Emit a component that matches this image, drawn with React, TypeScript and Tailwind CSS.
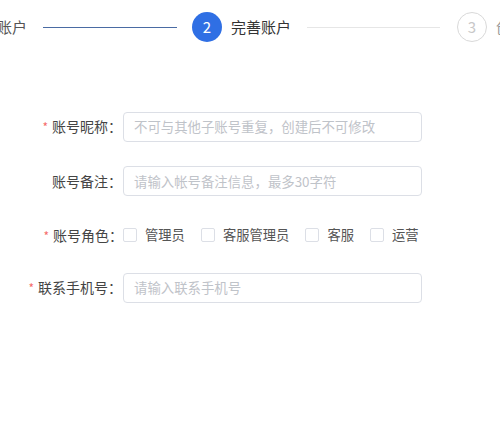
import React from "react";

const font = { fontFamily: '"Noto Sans CJK SC", "Noto Sans", sans-serif' };

function Field({
  label,
  required,
  placeholder,
  className,
}: {
  label: string;
  required?: boolean;
  placeholder: string;
  className?: string;
}) {
  return (
    <div className={"flex items-center " + (className ?? "")}>
      <div className="w-[122px] shrink-0 text-right text-[14px] leading-[30px] text-[#444]">
        {required && <span className="mr-[4px] text-[12px] text-[#f56c6c]">*</span>}
        {label}：
      </div>
      <div className="ml-[1px] flex h-[30px] w-[299px] items-center rounded-[4px] border border-[#dcdfe6] bg-white pl-[10px] text-[13.4px] text-[#bfc3c9]">
        {placeholder}
      </div>
    </div>
  );
}

function Check({ label, className }: { label: string; className?: string }) {
  return (
    <div className={"flex items-center " + (className ?? "")}>
      <span className="h-[14px] w-[14px] rounded-[2px] border border-[#dcdfe6] bg-white" />
      <span className="ml-[8px] text-[13.3px] text-[#555]">{label}</span>
    </div>
  );
}

export default function App() {
  return (
    <div className="h-[421px] w-[500px] overflow-hidden bg-white" style={font}>
      <div className="flex h-[54px] items-center whitespace-nowrap">
        <span className="ml-[-33px] shrink-0 text-[15px] text-[#555]">创建账户</span>
        <span className="ml-[16px] h-px w-[134px] shrink-0 bg-[#4a6ba3]" />
        <span className="ml-[15px] flex h-[30px] w-[30px] shrink-0 items-center justify-center rounded-full bg-[#2f6fe4] text-[15px] text-white">
          2
        </span>
        <span className="ml-[9px] shrink-0 text-[15px] text-[#333]">完善账户</span>
        <span className="ml-[16px] h-px w-[133px] shrink-0 bg-[#e6e6e6]" />
        <span className="ml-[17px] flex h-[30px] w-[30px] shrink-0 items-center justify-center rounded-full border border-[#d9d9d9] text-[15px] text-[#c8c8c8]">
          3
        </span>
        <span className="ml-[9px] shrink-0 text-[15px] text-[#999]">创建成功</span>
      </div>

      <Field
        className="mt-[57px]"
        label="账号昵称"
        required
        placeholder="不可与其他子账号重复，创建后不可修改"
      />
      <Field
        className="mt-[24px]"
        label="账号备注"
        placeholder="请输入帐号备注信息，最多30字符"
      />
      <div className="mt-[24px] flex h-[30px] items-center">
        <div className="w-[123px] shrink-0 text-right text-[14px] leading-[30px] text-[#444]">
          <span className="mr-[4px] text-[12px] text-[#f56c6c]">*</span>
          账号角色：
        </div>
        <Check label="管理员" />
        <Check label="客服管理员" className="ml-[16px]" />
        <Check label="客服" className="ml-[16px]" />
        <Check label="运营" className="ml-[16px]" />
      </div>
      <Field
        className="mt-[22px]"
        label="联系手机号"
        required
        placeholder="请输入联系手机号"
      />
    </div>
  );
}
